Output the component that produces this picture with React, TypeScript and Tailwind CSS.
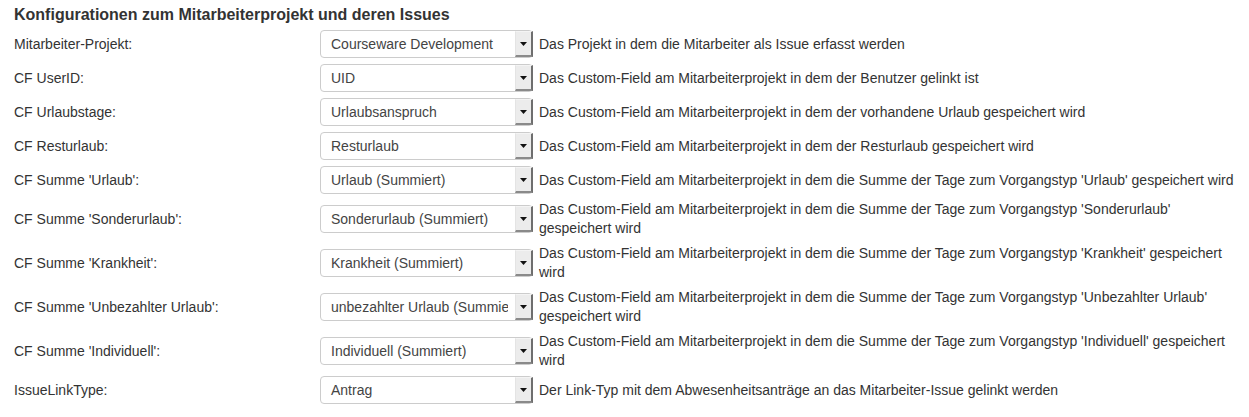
const rows = [
  {
    label: 'Mitarbeiter-Projekt:',
    value: 'Courseware Development',
    desc: 'Das Projekt in dem die Mitarbeiter als Issue erfasst werden',
  },
  {
    label: 'CF UserID:',
    value: 'UID',
    desc: 'Das Custom-Field am Mitarbeiterprojekt in dem der Benutzer gelinkt ist',
  },
  {
    label: 'CF Urlaubstage:',
    value: 'Urlaubsanspruch',
    desc: 'Das Custom-Field am Mitarbeiterprojekt in dem der vorhandene Urlaub gespeichert wird',
  },
  {
    label: 'CF Resturlaub:',
    value: 'Resturlaub',
    desc: 'Das Custom-Field am Mitarbeiterprojekt in dem der Resturlaub gespeichert wird',
  },
  {
    label: "CF Summe 'Urlaub':",
    value: 'Urlaub (Summiert)',
    desc: "Das Custom-Field am Mitarbeiterprojekt in dem die Summe der Tage zum Vorgangstyp 'Urlaub' gespeichert wird",
  },
  {
    label: "CF Summe 'Sonderurlaub':",
    value: 'Sonderurlaub (Summiert)',
    desc: "Das Custom-Field am Mitarbeiterprojekt in dem die Summe der Tage zum Vorgangstyp 'Sonderurlaub' gespeichert wird",
  },
  {
    label: "CF Summe 'Krankheit':",
    value: 'Krankheit (Summiert)',
    desc: "Das Custom-Field am Mitarbeiterprojekt in dem die Summe der Tage zum Vorgangstyp 'Krankheit' gespeichert wird",
  },
  {
    label: "CF Summe 'Unbezahlter Urlaub':",
    value: 'unbezahlter Urlaub (Summiert)',
    desc: "Das Custom-Field am Mitarbeiterprojekt in dem die Summe der Tage zum Vorgangstyp 'Unbezahlter Urlaub' gespeichert wird",
  },
  {
    label: "CF Summe 'Individuell':",
    value: 'Individuell (Summiert)',
    desc: "Das Custom-Field am Mitarbeiterprojekt in dem die Summe der Tage zum Vorgangstyp 'Individuell' gespeichert wird",
  },
  {
    label: 'IssueLinkType:',
    value: 'Antrag',
    desc: 'Der Link-Typ mit dem Abwesenheitsanträge an das Mitarbeiter-Issue gelinkt werden',
  },
];

function SelectBox({ value }: { value: string }) {
  return (
    <div className="relative flex items-center h-[28px] w-[213px] shrink-0 rounded-[4px] border border-[#cccccc] bg-white">
      <span className="block w-[187px] overflow-hidden whitespace-nowrap pl-[10px] text-[#444]">
        {value}
      </span>
      <div className="absolute right-[-1px] top-0 flex h-[26px] w-[18px] items-center justify-center border-l border-t border-l-[#e4e4e4] border-t-[#f4f4f4] border-r-2 border-b-2 border-r-[#6e6e6e] border-b-[#8a8a8a] bg-[#ececec]">
        <svg width="7" height="4" viewBox="0 0 7 4">
          <polygon points="0,0 7,0 3.5,4" fill="#111" />
        </svg>
      </div>
    </div>
  );
}

export default function App() {
  return (
    <div className="bg-white pl-[14px] text-[14px] text-[#333] font-['Liberation_Sans',Arial,sans-serif]">
      <h2 className="mt-[5px] mb-[2px] h-[20px] text-[16px] leading-[20px] font-bold">
        Konfigurationen zum Mitarbeiterprojekt und deren Issues
      </h2>
      <div>
        {rows.map((row) => (
          <div key={row.label} className="flex items-center py-[3px] leading-[19px]">
            <div className="w-[306px] shrink-0">{row.label}</div>
            <SelectBox value={row.value} />
            <div className="ml-[6px] w-[704px]">{row.desc}</div>
          </div>
        ))}
      </div>
    </div>
  );
}
